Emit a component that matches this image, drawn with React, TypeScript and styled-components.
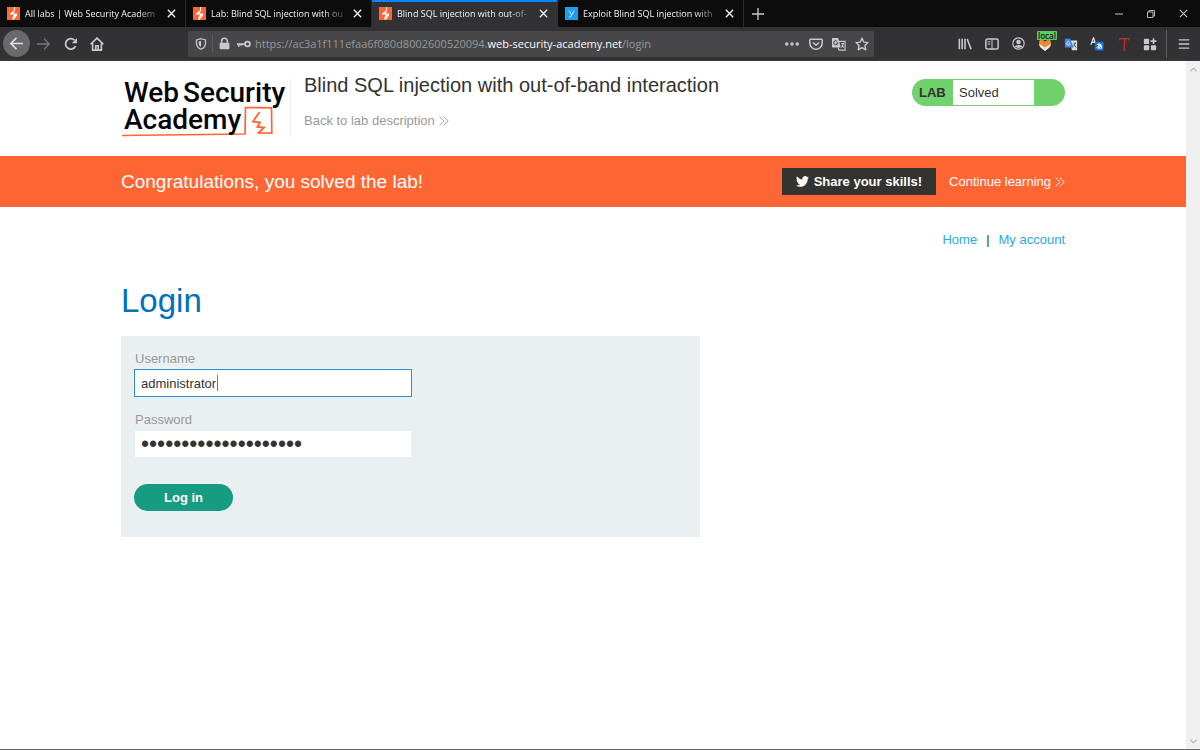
import React from "react";
import styled, { createGlobalStyle } from "styled-components";

const GlobalStyle = createGlobalStyle`
  * { box-sizing: border-box; }
  body { margin: 0; background: #fff; }
  button, input { font: inherit; margin: 0; }
  h1, h2, p { margin: 0; font-weight: 400; }
  a { text-decoration: none; }
`;

const ui = `"Open Sans", "Noto Sans", sans-serif`;
const sans = `"Liberation Sans", Arial, sans-serif`;

const Shell = styled.div`
  display: flex;
  flex-direction: column;
  min-height: 100vh;
  font-family: ${sans};
  font-size: 13px;
  color: #333332;
  border-bottom: 1px solid #6b6969;
`;

/* ---------- browser chrome ---------- */

const TabStrip = styled.div`
  display: flex;
  height: 27px;
  background: #0c0c0c;
  font-family: ${ui};
  font-size: 9px;
  color: #f3f3f4;
`;

const Tab = styled.div<{ $active?: boolean }>`
  display: flex;
  align-items: center;
  flex: 0 1 186px;
  min-width: 0;
  padding: 0 8px 0 7px;
  gap: 5px;
  background: ${(p) => (p.$active ? "#323234" : "transparent")};
  border-right: 1px solid ${(p) => (p.$active ? "#323234" : "#29292b")};
  box-shadow: ${(p) => (p.$active ? "inset 0 2px 0 #0a84ff" : "none")};
`;

const TabTitle = styled.span`
  flex: 1;
  min-width: 0;
  overflow: hidden;
  white-space: nowrap;
  line-height: 16px;
  mask-image: linear-gradient(to right, #000 82%, transparent 102%);
`;

const IconButton = styled.button<{ $w?: number; $h?: number }>`
  display: flex;
  align-items: center;
  justify-content: center;
  flex: none;
  width: ${(p) => p.$w ?? 16}px;
  height: ${(p) => p.$h ?? 27}px;
  padding: 0;
  border: 0;
  background: none;
  color: #c9c9cb;
`;

const ForwardButton = styled(IconButton)`
  color: #77777a;
`;

const TabClose = styled(IconButton)`
  width: 11px;
  color: #f3f3f4;
`;

const Favicon = styled.svg`
  flex: none;
  width: 13px;
  height: 13px;
`;

const WindowControls = styled.div`
  display: flex;
  margin-left: auto;
  padding-right: 1px;
`;

const Toolbar = styled.div`
  display: flex;
  align-items: center;
  height: 34px;
  padding-left: 3px;
  background: #323234;
  border-bottom: 1px solid #3a3a3c;
`;

const BackButton = styled(IconButton)`
  border-radius: 50%;
  background: #6a6a6c;
  color: #dededf;
`;

const AddressBar = styled.div`
  display: flex;
  align-items: center;
  flex: 1;
  min-width: 0;
  height: 26px;
  margin: 0 78px;
  padding: 0 0 0 4px;
  border-radius: 2px;
  background: #474749;
`;

const BarDivider = styled.span<{ $h: number }>`
  flex: none;
  width: 1px;
  height: ${(p) => p.$h}px;
  margin-left: 3px;
  background: #5c5c5e;
`;

const Url = styled.span`
  flex: 1;
  min-width: 0;
  overflow: hidden;
  white-space: nowrap;
  padding-left: 2px;
  font-family: ${ui};
  font-size: 11px;
  line-height: 18px;
  color: #97979a;
  b { font-weight: 400; color: #f9f9fa; }
`;

const ToolbarActions = styled.div`
  display: flex;
  align-items: center;
`;

const Badged = styled(IconButton)`
  position: relative;
`;

const Badge = styled.span`
  position: absolute;
  top: 4px;
  left: 6px;
  padding: 0 1px;
  border-radius: 1px;
  background: #5ecb62;
  color: #0b210c;
  font-family: ${ui};
  font-size: 8px;
  font-weight: 600;
  line-height: 9px;
`;

/* ---------- page ---------- */

const Viewport = styled.div`
  display: flex;
  flex: 1;
`;

const Page = styled.div`
  flex: 1;
  min-width: 0;
`;

const ScrollTrack = styled.div`
  display: flex;
  flex-direction: column;
  justify-content: space-between;
  align-items: center;
  width: 14px;
  padding: 5px 0 4px;
  background: #f0f0f0;
  color: #b4b4b4;
`;

const Header = styled.header`
  display: flex;
  align-items: flex-start;
  height: 95px;
  padding: 12px 121px 0;
`;

const Logo = styled.a`
  position: relative;
  flex: none;
  width: 170px;
  height: 58px;
  margin-top: 6px;
  padding-left: 3px;
  border-right: 1px solid #f0f0f0;
  color: #050505;
  font-family: Roboto, sans-serif;
  font-weight: 500;
  font-size: 28px;
  line-height: 27px;
`;

const LogoLine = styled.span`
  position: relative;
  display: flex;
  gap: 4px;
`;

const LogoMark = styled.svg`
  position: absolute;
  left: 0;
  top: 26px;
  width: 156px;
  height: 32px;
`;

const Titles = styled.div`
  flex: 1;
  padding: 0 13px;
`;

const LabTitle = styled.h2`
  font-size: 20px;
  line-height: 24px;
`;

const BackLink = styled.a`
  display: inline-flex;
  align-items: center;
  gap: 4px;
  margin-top: 14px;
  line-height: 20px;
  color: #999;
`;

const Status = styled.div`
  display: flex;
  width: 153px;
  height: 27px;
  margin-top: 6px;
  border-radius: 14px;
  overflow: hidden;
  background: #70d16d;
  line-height: 27px;
`;

const StatusLabel = styled.strong`
  width: 41px;
  padding-left: 7px;
`;

const StatusText = styled.span`
  width: 81px;
  margin: 1px 0;
  padding-left: 6px;
  line-height: 25px;
  background: #fff;
`;

const Banner = styled.section`
  display: flex;
  align-items: center;
  height: 51px;
  padding: 0 121px;
  background: #ff6633;
  color: #fff;
`;

const BannerText = styled.p`
  flex: 1;
  font-size: 19px;
  line-height: 24px;
`;

const ShareButton = styled.button`
  display: flex;
  align-items: center;
  gap: 5px;
  height: 27px;
  padding: 0 14px;
  border: 0;
  background: #333332;
  color: #fff;
  font-weight: 700;
`;

const ContinueLink = styled.a`
  display: flex;
  align-items: center;
  gap: 4px;
  margin-left: 13px;
  color: #fff;
`;

const Main = styled.main`
  padding: 23px 121px 0;
`;

const Nav = styled.nav`
  display: flex;
  justify-content: flex-end;
  gap: 9px;
  line-height: 20px;
  a { color: #29abe2; }
`;

const PageTitle = styled.h1`
  margin: 30px 0 14px;
  font-size: 33px;
  line-height: 42px;
  color: #0071bc;
`;

const LoginForm = styled.form`
  display: flex;
  flex-direction: column;
  align-items: flex-start;
  max-width: 579px;
  padding: 13px 13px 26px;
  background: #eaeff2;
`;

const FieldLabel = styled.label`
  padding-left: 1px;
  line-height: 20px;
  color: #999;
`;

const Field = styled.div`
  position: relative;
  width: 100%;
  max-width: 278px;
  margin-bottom: 13px;
`;

const TextInput = styled.input<{ $focused?: boolean }>`
  display: block;
  width: 100%;
  height: 28px;
  padding: 0 6px;
  border: 1px solid ${(p) => (p.$focused ? "#2f8fd0" : "#eaeff2")};
  border-radius: 0;
  outline: 0;
  background: #fff;
  color: #333332;
  &[type="password"] {
    font-size: 23px;
  }
`;

const Caret = styled.span`
  position: absolute;
  left: 83px;
  top: 6px;
  width: 1px;
  height: 16px;
  background: #777;
`;

const SubmitButton = styled.button`
  height: 27px;
  margin-top: 13px;
  padding: 0 30px;
  border: 0;
  border-radius: 14px;
  background: #169c80;
  color: #fff;
  font-weight: 700;
`;

/* ---------- drawings ---------- */

const Bolt = () => (
  <Favicon viewBox="0 0 26 26" aria-hidden="true">
    <rect width="26" height="26" fill="#ff6633" />
    <path d="M14 0v7L6 13v2h8l-3 6v5h2l7-9v-4h-7l3-6V0z" fill="#fff" />
  </Favicon>
);

const YIcon = () => (
  <Favicon viewBox="0 0 26 26" aria-hidden="true">
    <rect width="26" height="26" fill="#1f9cf0" />
    <path d="M8 7l5 9M18 7l-6 12-4 1" fill="none" stroke="#d4ecff" strokeWidth="2" />
  </Favicon>
);

const Stroke = ({ size = 14, w = 1.5, children }: { size?: number; w?: number; children: React.ReactNode }) => (
  <svg width={size} height={size} viewBox="0 0 16 16" fill="none" stroke="currentColor" strokeWidth={w} aria-hidden="true">
    {children}
  </svg>
);

const Cross = ({ size = 9, w = 2.4 }: { size?: number; w?: number }) => (
  <Stroke size={size} w={w}>
    <path d="M1.500 1.500l13 13M14.500 1.500l-13 13" />
  </Stroke>
);

const Chevrons = () => (
  <svg width="10" height="10" viewBox="0 0 10 10" fill="none" stroke="currentColor" strokeWidth="0.900" aria-hidden="true">
    <path d="M.6.5L5 5 .6 9.500M4.800.5L9.200 5 4.800 9.500" />
  </svg>
);

const TwitterBird = () => (
  <svg width="13" height="11" viewBox="0 0 24 20" fill="#fff" aria-hidden="true">
    <path d="M24 2.400a9.800 9.800 0 0 1-2.800.8A4.900 4.900 0 0 0 23.300.4a9.900 9.900 0 0 1-3.100 1.200 4.900 4.900 0 0 0-8.400 4.500A14 14 0 0 1 1.700.9a4.900 4.900 0 0 0 1.500 6.600 4.900 4.900 0 0 1-2.200-.6v.1a4.900 4.900 0 0 0 3.900 4.800 4.900 4.900 0 0 1-2.200.1 4.900 4.900 0 0 0 4.600 3.400A9.900 9.900 0 0 1 0 17.500a13.900 13.900 0 0 0 7.500 2.200c9.100 0 14.300-7.700 14-14.600A10 10 0 0 0 24 2.400z" />
  </svg>
);

const tabs = [
  { title: "All labs | Web Security Academ", icon: <Bolt /> },
  { title: "Lab: Blind SQL injection with ou", icon: <Bolt /> },
  { title: "Blind SQL injection with out-of-", icon: <Bolt />, active: true },
  { title: "Exploit Blind SQL injection with", icon: <YIcon /> },
];

export default function App() {
  return (
    <>
      <GlobalStyle />
      <Shell>
        <TabStrip>
          {tabs.map((t) => (
            <Tab key={t.title} $active={t.active}>
              {t.icon}
              <TabTitle>{t.title}</TabTitle>
              <TabClose aria-label="Close tab"><Cross /></TabClose>
            </Tab>
          ))}
          <IconButton $w={27} aria-label="New tab">
            <Stroke size={12} w={1.8}><path d="M8 0v16M0 8h16" /></Stroke>
          </IconButton>
          <WindowControls>
            <IconButton $w={32} aria-label="Minimize">
              <Stroke size={8} w={2}><path d="M0 8h16" /></Stroke>
            </IconButton>
            <IconButton $w={32} aria-label="Restore">
              <Stroke size={8} w={1.8}><path d="M1 4h11v11H1zM4 4V1h11v11h-3" /></Stroke>
            </IconButton>
            <IconButton $w={32} aria-label="Close window"><Cross size={9} w={1.8} /></IconButton>
          </WindowControls>
        </TabStrip>

        <Toolbar>
          <BackButton $w={27} aria-label="Back">
            <Stroke size={15} w={1.8}><path d="M15 8H2M8 2L2 8l6 6" /></Stroke>
          </BackButton>
          <ForwardButton $w={27} aria-label="Forward">
            <Stroke><path d="M0 8h14M8 2l6 6-6 6" /></Stroke>
          </ForwardButton>
          <IconButton $w={27} aria-label="Reload">
            <Stroke w={2}>
              <path d="M13.200 10.500A6 6 0 1 1 12 3.600" />
              <path d="M14.800 1v6H9z" fill="currentColor" stroke="none" />
            </Stroke>
          </IconButton>
          <IconButton $w={26} aria-label="Home">
            <Stroke w={1.900}>
              <path d="M.7 8.300L8 1.200l7.300 7.100M3 7v8h10V7" />
              <path d="M6.600 15v-5h2.800v5" />
            </Stroke>
          </IconButton>

          <AddressBar>
            <IconButton $w={17} aria-label="Tracking protection">
              <Stroke size={12} w={1.7}>
                <path d="M8 1l6 1.500V7c0 4-2.500 6.500-6 8-3.500-1.500-6-4-6-8V2.500z" />
                <path d="M8 4v8c-2-1-3-3-3-5V4.600z" fill="currentColor" stroke="none" />
              </Stroke>
            </IconButton>
            <BarDivider $h={17} />
            <IconButton $w={22} aria-label="Connection security">
              <Stroke size={13} w={1.900}>
                <path d="M4.500 8V5a3.500 3.500 0 0 1 7 0v3" />
                <rect x="2" y="7" width="12" height="8" rx="1.200" fill="currentColor" stroke="none" />
              </Stroke>
            </IconButton>
            <IconButton $w={18} aria-label="Saved login">
              <Stroke w={2}>
                <circle cx="12" cy="8" r="2.800" />
                <path d="M9 8H0M2 8v3M5 8v2" />
              </Stroke>
            </IconButton>
            <Url>
              https://ac3a1f111efaa6f080d8002600520094.<b>web-security-academy.net</b>/login
            </Url>
            <IconButton $w={24} aria-label="Page actions">
              <Stroke><g fill="currentColor" stroke="none"><circle cx="2" cy="8" r="2" /><circle cx="8" cy="8" r="2" /><circle cx="14" cy="8" r="2" /></g></Stroke>
            </IconButton>
            <IconButton $w={23} aria-label="Save to Pocket">
              <Stroke w={1.7}>
                <path d="M2 2.500h12q1 0 1 1V7a7 7 0 0 1-14 0V3.500q0-1 1-1z" />
                <path d="M4.600 6.200L8 9.400l3.400-3.200" />
              </Stroke>
            </IconButton>
            <IconButton $w={23} aria-label="Translate page">
              <Stroke w={1.2}>
                <path d="M7 5h8v10H8l-1-3" />
                <path d="M0 1h7l3 11H1Q0 12 0 11z" fill="currentColor" stroke="none" />
                <path d="M6 5A2.300 2.300 0 1 0 6.500 7H5" stroke="#555557" />
                <path d="M10.500 7.500h3.500M13 8l-2 4M11 9l3 3" />
              </Stroke>
            </IconButton>
            <IconButton $w={24} aria-label="Bookmark">
              <Stroke w={1.6}>
                <path d="M8 1.400l2 4.400 4.900.6-3.600 3.300 1 4.900L8 12.200l-4.300 2.400 1-4.900L1.100 6.400 6 5.800z" strokeLinejoin="round" />
              </Stroke>
            </IconButton>
          </AddressBar>

          <ToolbarActions>
            <IconButton $w={26} aria-label="Library">
              <Stroke w={1.8}><path d="M1.500 2v12M4.700 2v12M8 2v12M10.500 2.200L15 14" /></Stroke>
            </IconButton>
            <IconButton $w={27} aria-label="Sidebars">
              <Stroke w={1.7}>
                <rect x="1" y="2.300" width="14" height="11.400" rx="1.800" />
                <path d="M8 2v12M3 5.500h3M3 8h3" strokeWidth="1.200" />
              </Stroke>
            </IconButton>
            <IconButton $w={26} aria-label="Account">
              <Stroke size={13} w={1.4}>
                <circle cx="8" cy="8" r="7" />
                <circle cx="8" cy="6.200" r="2.800" fill="currentColor" stroke="none" />
                <path d="M3 11.500q5-3.500 10 0-5 4-10 0z" fill="currentColor" stroke="none" />
              </Stroke>
            </IconButton>
            <Badged $w={27} $h={33} aria-label="Proxy: local">
              <svg width="14" height="14" viewBox="0 0 16 16" aria-hidden="true">
                <path d="M1 6l2-4 5 3 5-3 2 4-1 5-6 5-6-5z" fill="#e88a2d" />
                <path d="M1 8l3 1 4 2 4-2 3-1-2 4-5 4-5-4z" fill="#eee6dc" />
                <path d="M3 8.500L8 7l5 1.500L8 12z" fill="#e58a35" />
              </svg>
              <Badge>local</Badge>
            </Badged>
            <IconButton $w={26} aria-label="Google Translate">
              <svg width="14" height="14" viewBox="0 0 16 16" aria-hidden="true">
                <path d="M7 4h8v11H9z" fill="#d9d9d9" />
                <path d="M1 2h6l4 10H1z" fill="#4a86e8" />
                <path d="M6.500 6A2 2 0 1 0 7 8H5.500" fill="none" stroke="#fff" />
                <path d="M11 7h3M13 7l-2 4M11 8l3 4" fill="none" stroke="#555" />
              </svg>
            </IconButton>
            <IconButton $w={26} aria-label="Text translator">
              <svg width="14" height="14" viewBox="0 0 16 16" aria-hidden="true">
                <path d="M1 9l3-8 3 8M2 6h4" fill="none" stroke="#ddd" strokeWidth="1.500" />
                <rect x="5.500" y="5.500" width="10" height="10" rx="1.500" fill="#1473e6" />
                <path d="M8 8.500h5M10.300 7v6M12.500 9.500q-1 4-3.500 3.500t1-3q4-1 3.500 1.500t-2 2" fill="none" stroke="#fff" strokeWidth="1.100" />
              </svg>
            </IconButton>
            <IconButton $w={27} aria-label="Text tool">
              <svg width="14" height="14" viewBox="0 0 16 16" aria-hidden="true">
                <path d="M2 4.500L3 1h11.500l-1 3.500-.8-2H9.800L9 14l1 1.500H6.500L7.500 14l.5-11.500H4z" fill="#c03024" />
              </svg>
            </IconButton>
            <IconButton $w={26} aria-label="Extensions">
              <Stroke w={1.8}>
                <g fill="currentColor" stroke="none">
                  <rect x="1" y="2" width="6" height="6" rx="1" />
                  <rect x="1" y="9.500" width="6" height="5.500" rx="1" />
                  <rect x="9" y="9.500" width="6" height="5.500" rx="1" />
                </g>
                <path d="M12 1.500v6.500M8.800 4.700h6.500" />
              </Stroke>
            </IconButton>
            <BarDivider $h={28} />
            <IconButton $w={33} aria-label="Open menu">
              <Stroke size={12} w={1.8}><path d="M1 2.500h14M1 8h14M1 13.500h14" /></Stroke>
            </IconButton>
          </ToolbarActions>
        </Toolbar>

        <Viewport>
          <Page>
            <Header>
              <Logo href="#" aria-label="Web Security Academy">
                <LogoMark viewBox="0 0 156 32" fill="none" stroke="#ff6633" aria-hidden="true">
                  <path d="M1 30.500L124 29l.5-26.500 26 .3.300 25.400-14.300-.2" strokeWidth="1.700" />
                  <path d="M138.500 7l-6.500 9.500 7 1-2.500 4.500 6.500.5-6 6" strokeWidth="1.900" />
                </LogoMark>
                <LogoLine><span>Web</span><span>Security</span></LogoLine>
                <LogoLine>Academy</LogoLine>
              </Logo>
              <Titles>
                <LabTitle>Blind SQL injection with out-of-band interaction</LabTitle>
                <BackLink href="#">Back to lab description <Chevrons /></BackLink>
              </Titles>
              <Status>
                <StatusLabel>LAB</StatusLabel>
                <StatusText>Solved</StatusText>
              </Status>
            </Header>

            <Banner>
              <BannerText>Congratulations, you solved the lab!</BannerText>
              <ShareButton type="button"><TwitterBird />Share your skills!</ShareButton>
              <ContinueLink href="#">Continue learning <Chevrons /></ContinueLink>
            </Banner>

            <Main>
              <Nav>
                <a href="#">Home</a>
                <span>|</span>
                <a href="#">My account</a>
              </Nav>
              <PageTitle>Login</PageTitle>
              <LoginForm onSubmit={(e) => e.preventDefault()}>
                <FieldLabel htmlFor="username">Username</FieldLabel>
                <Field>
                  <TextInput id="username" type="text" defaultValue="administrator" $focused />
                  <Caret />
                </Field>
                <FieldLabel htmlFor="password">Password</FieldLabel>
                <Field>
                  <TextInput id="password" type="password" defaultValue="abcdefghij0123456789" />
                </Field>
                <SubmitButton type="submit">Log in</SubmitButton>
              </LoginForm>
            </Main>
          </Page>
          <ScrollTrack>
            <Stroke size={7} w={2.6}><path d="M1 12l7-7 7 7" /></Stroke>
            <Stroke size={7} w={2.6}><path d="M1 4l7 7 7-7" /></Stroke>
          </ScrollTrack>
        </Viewport>
      </Shell>
    </>
  );
}
